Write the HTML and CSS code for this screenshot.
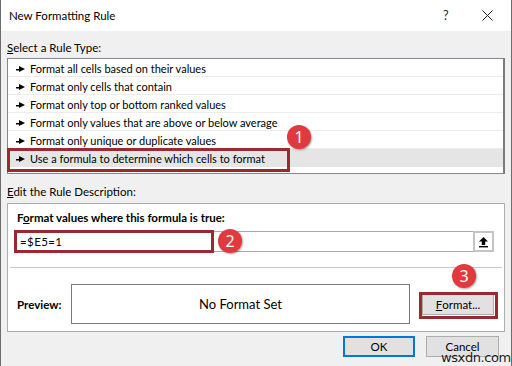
FILE: index.html
```html
<!DOCTYPE html>
<html>
<head>
<meta charset="utf-8">
<link rel="stylesheet" href="styles.css">
</head>
<body>
<div class="dialog">
  <div class="titlebar">
    <span class="title">New Formatting Rule</span>
    <span class="help">?</span>
    <span class="close">
      <svg width="11" height="11" viewBox="0 0 11 11"><path d="M0.5 0.5L10.5 10.5M10.5 0.5L0.5 10.5" stroke="#222" stroke-width="1" fill="none"/></svg>
    </span>
  </div>
  <div class="body">
    <div class="section-label"><u>S</u>elect a Rule Type:</div>
    <div class="listbox">
      <div class="row"><span class="arrow"></span>Format all cells based on their values</div>
      <div class="row"><span class="arrow"></span>Format only cells that contain</div>
      <div class="row"><span class="arrow"></span>Format only top or bottom ranked values</div>
      <div class="row"><span class="arrow"></span>Format only values that are above or below average</div>
      <div class="row"><span class="arrow"></span>Format only unique or duplicate values</div>
      <div class="row selected"><span class="arrow"></span>Use a formula to determine which cells to format</div>
    </div>
    <div class="section-label second"><u>E</u>dit the Rule Description:</div>
    <div class="panel">
      <div class="panel-label">F<u>o</u>rmat values where this formula is true:</div>
      <div class="formula-row">
        <div class="formula">=$E5=1</div>
        <div class="collapse-btn">
          <svg width="11" height="12" viewBox="0 0 11 12"><path d="M5.5 1L1 5.5H3.8V9H7.2V5.5H10Z" fill="#000"/><rect x="1" y="10" width="9" height="1.4" fill="#000"/></svg>
        </div>
      </div>
      <div class="divider"></div>
      <div class="preview-row">
        <div class="preview-label">Preview:</div>
        <div class="preview-box">No Format Set</div>
        <div class="btn format-btn"><u>F</u>ormat...</div>
      </div>
    </div>
    <div class="footer">
      <div class="btn ok-btn">OK</div>
      <div class="btn cancel-btn">Cancel</div>
    </div>
  </div>

  <div class="mark mark-rule"></div>
  <div class="mark mark-formula"></div>
  <div class="mark mark-format"></div>
  <div class="badge badge-1">1</div>
  <div class="badge badge-2">2</div>
  <div class="badge badge-3">3</div>
  <div class="watermark">wsxdn.com</div>
</div>
</body>
</html>
```

FILE: styles.css
```css
* { box-sizing: border-box; }
html, body { margin: 0; padding: 0; }
body {
  width: 512px;
  height: 366px;
  overflow: hidden;
  background: #f0f0f0;
  font-family: Lato, "Noto Sans", sans-serif;
  font-size: 11px;
  color: #000;
}
.dialog {
  position: relative;
  width: 512px;
  height: 366px;
  background: #f0f0f0;
  border-left: 1px solid #6d6d6d;
  border-right: 1px solid #6d6d6d;
}
.titlebar {
  height: 31px;
  background: #fff;
  display: flex;
  align-items: center;
  padding-left: 8px;
}
.title {
  flex: 1;
  font-size: 11.5px;
  color: #000;
}
.help {
  font-size: 12.5px;
  width: 8px;
  margin-right: 31px;
  color: #222;
}
.close {
  width: 11px;
  height: 11px;
  margin-right: 18px;
  display: flex;
}
.body {
  padding: 0 6px;
}
.section-label {
  height: 27px;
  padding-top: 9px;
  line-height: 16px;
  font-size: 11.5px;
}
.section-label u, .panel-label u, .btn u { text-decoration: underline; }
.section-label.second {
  height: 29px;
  padding-top: 10px;
}
.listbox {
  height: 116px;
  background: #fff;
  border: 1px solid #828790;
  border-right: 2px solid #7a7a7a;
}
.row {
  height: 18px;
  border-bottom: 1px solid #ececec;
  display: flex;
  align-items: center;
  padding-left: 8px;
  padding-top: 3px;
  line-height: 16px;
  white-space: nowrap;
}
.row.selected {
  background: #e5e5e5;
  border-bottom-color: #e5e5e5;
}
.arrow {
  display: inline-block;
  width: 9px;
  height: 7px;
  margin-right: 5px;
  background: linear-gradient(#000, #000) 0 3px / 5px 1.5px no-repeat;
  position: relative;
}
.arrow::after {
  content: "";
  position: absolute;
  left: 3px;
  top: 0;
  border-left: 6px solid #000;
  border-top: 3.5px solid transparent;
  border-bottom: 3.5px solid transparent;
}
.panel {
  height: 129px;
  background: #fff;
  border: 1px solid #adadad;
  padding: 6px 0 0 0;
}
.panel-label {
  font-weight: bold;
  padding-left: 9px;
  line-height: 16px;
  height: 21px;
  font-size: 11.5px;
}
.formula-row {
  display: flex;
  margin-left: 8px;
  margin-right: 10px;
  height: 21px;
  border: 1px solid #a9a9a9;
}
.formula {
  flex: 1;
  line-height: 19px;
  padding-left: 3px;
  letter-spacing: 0.4px;
  font-size: 11.5px;
}
.collapse-btn {
  width: 21px;
  margin: -1px -1px -1px 0;
  border: 2px solid #c4c4c4;
  background: #fff;
  display: flex;
  align-items: center;
  justify-content: center;
}
.divider {
  height: 1px;
  background: #c8c8c8;
  margin: 15px 2px 0 2px;
}
.preview-row {
  display: flex;
  align-items: center;
  margin-top: 16px;
  padding-left: 9px;
}
.preview-label {
  font-weight: bold;
  width: 54px;
  font-size: 11.5px;
}
.preview-box {
  width: 339px;
  height: 40px;
  border: 1px solid #7a7a7a;
  display: flex;
  align-items: center;
  justify-content: center;
  font-size: 13px;
}
.btn {
  background: #e1e1e1;
  border: 1px solid #adadad;
  height: 21px;
  display: flex;
  align-items: center;
  justify-content: center;
  font-size: 11.5px;
}
.format-btn {
  width: 72px;
  margin-left: 12px;
  margin-top: 1px;
}
.footer {
  display: flex;
  justify-content: flex-end;
  gap: 11px;
  padding-top: 4px;
  padding-right: 6px;
}
.ok-btn {
  width: 72px;
  border: 2px solid #0078d7;
}
.cancel-btn {
  width: 73px;
}
.mark {
  position: absolute;
  border: 3px solid #9b2a2f;
}
.mark-rule { left: 6px; top: 148px; width: 283px; height: 24px; }
.mark-formula { left: 13px; top: 230px; width: 200px; height: 23px; }
.mark-format { left: 418px; top: 292px; width: 79px; height: 27px; }
.badge {
  position: absolute;
  width: 24px;
  height: 24px;
  border-radius: 50%;
  background: #e0393e;
  color: #fff;
  font-family: "Noto Sans", sans-serif;
  font-size: 16px;
  display: flex;
  align-items: center;
  justify-content: center;
  box-shadow: 1px 1px 2px rgba(0,0,0,0.35);
}
.badge-1 { left: 286px; top: 125px; }
.badge-2 { left: 217px; top: 229px; }
.badge-3 { left: 451px; top: 264px; }
.watermark {
  position: absolute;
  left: 440px;
  top: 350px;
  font-size: 13px;
  color: #222;
  font-family: "DejaVu Sans", sans-serif;
  letter-spacing: -0.4px;
}
```
